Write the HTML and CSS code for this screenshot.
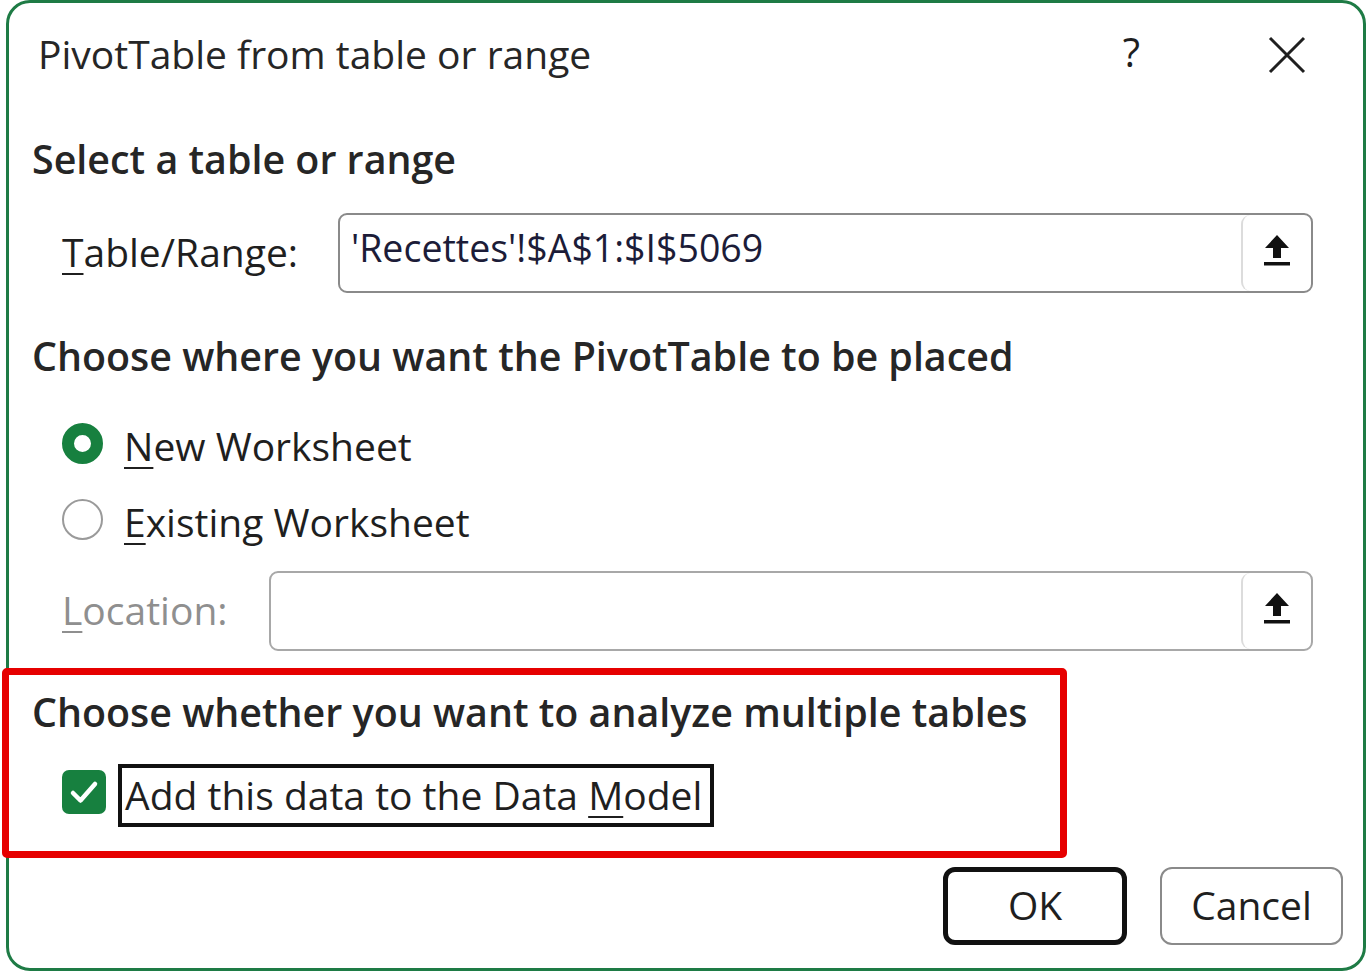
FILE: index.html
```html
<!DOCTYPE html>
<html lang="en">
<head>
<meta charset="utf-8">
<title>PivotTable from table or range</title>
<link rel="stylesheet" href="styles.css">
</head>
<body>
<div class="dialog">
  <div class="titlebar">
    <div class="title">PivotTable from table or range</div>
    <div class="title-actions">
      <span class="help">?</span>
      <svg class="close" width="38" height="38" viewBox="0 0 38 38"><path d="M2 2 L36 36 M36 2 L2 36" stroke="#1f1f1f" stroke-width="3" fill="none"/></svg>
    </div>
  </div>

  <div class="heading h1">Select a table or range</div>
  <div class="field-row range-row">
    <div class="label label-range"><u>T</u>able/Range:</div>
    <div class="input">
      <div class="input-text">'Recettes'!$A$1:$I$5069</div>
      <div class="picker">
        <svg width="30" height="34" viewBox="0 0 30 34"><path d="M15 1 L27 14 L19 14 L19 24 L11 24 L11 14 L3 14 Z" fill="#111"/><rect x="2" y="28" width="26" height="3.5" fill="#111"/></svg>
      </div>
    </div>
  </div>

  <div class="heading h2">Choose where you want the PivotTable to be placed</div>
  <div class="option opt1">
    <span class="radio checked"></span>
    <span class="opt-label"><u>N</u>ew Worksheet</span>
  </div>
  <div class="option opt2">
    <span class="radio"></span>
    <span class="opt-label"><u>E</u>xisting Worksheet</span>
  </div>
  <div class="field-row loc-row">
    <div class="label label-loc disabled"><u>L</u>ocation:</div>
    <div class="input input-disabled">
      <div class="input-text"></div>
      <div class="picker">
        <svg width="30" height="34" viewBox="0 0 30 34"><path d="M15 1 L27 14 L19 14 L19 24 L11 24 L11 14 L3 14 Z" fill="#111"/><rect x="2" y="28" width="26" height="3.5" fill="#111"/></svg>
      </div>
    </div>
  </div>

  <div class="heading h3">Choose whether you want to analyze multiple tables</div>
  <div class="check-row">
    <span class="checkbox">
      <svg width="44" height="44" viewBox="0 0 44 44"><path d="M11 23 L18.5 30.5 L33 14" stroke="#fff" stroke-width="4.5" fill="none" stroke-linecap="round" stroke-linejoin="round"/></svg>
    </span>
    <span class="check-label">Add this data to the Data <u>M</u>odel</span>
  </div>

  <div class="buttons">
    <div class="btn btn-default">OK</div>
    <div class="btn">Cancel</div>
  </div>
</div>
<div class="highlight"></div>
</body>
</html>
```

FILE: styles.css
```css
html, body {
  margin: 0;
  padding: 0;
  background: #ffffff;
}
body {
  width: 1369px;
  height: 973px;
  position: relative;
  overflow: hidden;
  font-family: "Open Sans", "Noto Sans", sans-serif;
  color: #1f1f1f;
  font-size: 39px;
}
.dialog {
  box-sizing: border-box;
  margin-left: 6px;
  width: 1360px;
  height: 971px;
  border: 3px solid #1e7b45;
  border-radius: 24px;
  background: #fff;
  display: flex;
  flex-direction: column;
}
u {
  text-decoration-thickness: 2px;
  text-underline-offset: 6px;
}
.titlebar {
  height: 104px;
  flex: none;
  display: flex;
  align-items: center;
  justify-content: space-between;
  padding-left: 29px;
  padding-right: 57px;
}
.title {
  font-size: 39px;
  color: #262626;
  padding-bottom: 4px;
}
.title-actions {
  display: flex;
  align-items: center;
  gap: 128px;
}
.help {
  font-size: 40px;
  line-height: 1;
  color: #1f1f1f;
  padding-bottom: 6px;
}
.heading {
  flex: none;
  font-weight: 600;
  font-size: 39.4px;
  height: 50px;
  line-height: 44px;
  padding-left: 23px;
  color: #262626;
  white-space: nowrap;
}
.h1 { margin-top: 30px; }
.h2 { margin-top: 41px; }
.h3 { margin-top: 39px; }
.field-row {
  flex: none;
  display: flex;
  align-items: center;
  padding-left: 53px;
  padding-right: 50px;
  height: 80px;
}
.range-row { margin-top: 26px; }
.loc-row { margin-top: 20px; }
.label { flex: none; white-space: nowrap; padding-bottom: 4px; }
.label-range { width: 276px; }
.label-loc { width: 207px; }
.disabled { color: #8f8f8f; }
.input {
  flex: 1;
  height: 80px;
  box-sizing: border-box;
  border: 2px solid #8a8a8a;
  border-radius: 9px;
  display: flex;
  align-items: stretch;
}
.input-disabled {
  border-color: #a8a8a8;
}
.input-text {
  flex: 1;
  display: flex;
  align-items: center;
  padding-left: 11px;
  padding-bottom: 12px;
  font-size: 37.5px;
  color: #1c1c38;
  white-space: nowrap;
}
.picker {
  width: 68px;
  flex: none;
  border-left: 2px solid #dcdcdc;
  border-radius: 9px;
  display: flex;
  align-items: center;
  justify-content: center;
  padding-bottom: 4px;
}
.option {
  flex: none;
  display: flex;
  align-items: center;
  height: 60px;
  padding-left: 53px;
}
.opt1 { margin-top: 31px; }
.opt2 { margin-top: 16px; }
.radio {
  width: 41px;
  height: 41px;
  box-sizing: border-box;
  border-radius: 50%;
  border: 2.5px solid #9a9a9a;
  margin-right: 21px;
  margin-top: -4px;
  flex: none;
}
.radio.checked {
  border: 12px solid #17803f;
}
.opt-label { white-space: nowrap; }
.check-row {
  flex: none;
  display: flex;
  align-items: center;
  height: 62px;
  margin-top: 24px;
  padding-left: 53px;
}
.checkbox {
  width: 44px;
  height: 44px;
  border-radius: 7px;
  background: #17803f;
  flex: none;
  margin-right: 12px;
  margin-top: -6px;
  display: flex;
}
.check-label {
  border: 4px solid #111;
  padding: 0 8px 2px 3px;
  line-height: 53px;
  white-space: nowrap;
}
.buttons {
  flex: none;
  margin-top: 41px;
  display: flex;
  justify-content: flex-end;
  gap: 33px;
  padding-right: 20px;
}
.btn {
  width: 183px;
  height: 78px;
  box-sizing: border-box;
  border: 2px solid #8a8a8a;
  border-radius: 12px;
  display: flex;
  align-items: center;
  justify-content: center;
  padding-bottom: 4px;
}
.btn-default {
  border: 5px solid #111;
  width: 184px;
}
.highlight {
  position: absolute;
  left: 2px;
  top: 668px;
  width: 1065px;
  height: 190px;
  box-sizing: border-box;
  border: 7px solid #e60000;
  border-radius: 5px;
}
```
